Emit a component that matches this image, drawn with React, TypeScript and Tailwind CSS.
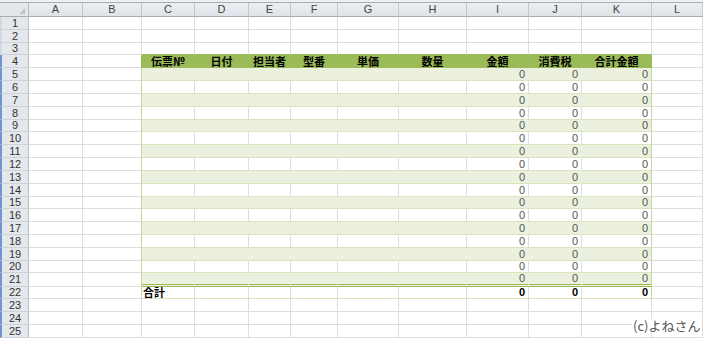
/**
 * Excel風 伝票一覧シート
 * 列見出し + 行番号 + 緑のテーブル (C4:K22)
 */

const COLS = [
  { key: 'A', w: 'w-[54px]' },
  { key: 'B', w: 'w-[59px]' },
  { key: 'C', w: 'w-[53px]' },
  { key: 'D', w: 'w-[54px]' },
  { key: 'E', w: 'w-[42px]' },
  { key: 'F', w: 'w-[47px]' },
  { key: 'G', w: 'w-[61px]' },
  { key: 'H', w: 'w-[68px]' },
  { key: 'I', w: 'w-[62px]' },
  { key: 'J', w: 'w-[53px]' },
  { key: 'K', w: 'w-[70px]' },
  { key: 'L', w: 'flex-1' },
];

const TABLE_COLS = ['C', 'D', 'E', 'F', 'G', 'H', 'I', 'J', 'K'];
const MONEY_COLS = ['I', 'J', 'K'];

const HEADERS: Record<string, string> = {
  C: '伝票№', D: '日付', E: '担当者', F: '型番', G: '単価',
  H: '数量', I: '金額', J: '消費税', K: '合計金額',
};

const ROWS = Array.from({ length: 25 }, (_, i) => i + 1);

/** 行の高さ (12.8px 平均になるよう調整) */
function rowHeight(r: number) {
  if (r === 21) return 'h-[14px]';
  if ([3, 9, 15, 20, 22].includes(r)) return 'h-[12px]';
  return 'h-[13px]';
}

/** セルの背景と罫線 */
function cellStyle(r: number, c: string) {
  const inTable = r >= 4 && r <= 22 && TABLE_COLS.includes(c);
  let bg = 'bg-white';
  let right = 'border-r-[#dcdddf]';
  let bottom = 'border-b border-b-[#dcdddf]';

  if (inTable) {
    if (r === 4) {
      bg = 'bg-[#9bbb59]';
      right = 'border-r-[#9bbb59]';
      bottom = 'border-b border-b-[#9bbb59]';
    } else if (r <= 21 && r % 2 === 1) {
      bg = 'bg-[#ebf1de]';
      right = 'border-r-[#ebf1de]';
      bottom = 'border-b border-b-[#d8e4bc]';
    } else {
      bottom = 'border-b border-b-[#d8e4bc]';
    }
    if (r === 21) bottom = 'border-b-[3px] border-double border-b-[#9bbb59]';
    if (c === 'K') right = r === 4 ? 'border-r-[#9bbb59]' : 'border-r-[#c4d79b]';
  }
  if (c === 'B' && r >= 4 && r <= 22) right = r === 4 ? 'border-r-[#9bbb59]' : 'border-r-[#c4d79b]';
  if (r === 3 && TABLE_COLS.includes(c)) bottom = 'border-b border-b-[#9bbb59]';

  return `${bg} border-r ${right} ${bottom}`;
}

/** セルの中身 */
function CellText({ r, c }: { r: number; c: string }) {
  if (r === 4 && HEADERS[c]) {
    return <span className="w-full text-center font-bold text-black">{HEADERS[c]}</span>;
  }
  if (r >= 5 && r <= 21 && MONEY_COLS.includes(c)) {
    return <span className="w-full text-right pr-[3px] text-[#555] font-['Liberation_Sans']">0</span>;
  }
  if (r === 22 && c === 'C') {
    return <span className="pl-[1px] font-bold text-black">合計</span>;
  }
  if (r === 22 && MONEY_COLS.includes(c)) {
    return <span className="w-full text-right pr-[3px] font-bold text-black font-['Liberation_Sans']">0</span>;
  }
  return null;
}

export default function App() {
  return (
    <div className="relative w-[703px] h-[338px] overflow-hidden bg-white font-['Noto_Sans_CJK_JP',sans-serif] text-[11px] leading-none select-none">
      {/* 数式バーの名残 */}
      <div className="h-[3px] bg-[#eef0f2] border-b border-b-[#a9aeb5]" />

      {/* 列見出し */}
      <div className="flex h-[14px]">
        <div className="w-[29px] shrink-0 relative bg-[#e4e7eb] border-r border-r-[#b9bec6] border-b border-b-[#a6acb5]">
          <svg width="6" height="6" viewBox="0 0 6 6" className="absolute right-[3px] bottom-[2px]">
            <polygon points="6,0 6,6 0,6" fill="#c2c6cc" />
          </svg>
        </div>
        {COLS.map((col) => (
          <div
            key={col.key}
            className={`${col.w} shrink-0 flex items-center justify-center bg-gradient-to-b from-[#eceff2] to-[#dfe3e8] border-r border-r-[#c3c8cf] border-b border-b-[#a6acb5] text-[#444] font-['Liberation_Sans'] text-[11px]`}
          >
            {col.key}
          </div>
        ))}
      </div>

      {/* 行 */}
      {ROWS.map((r) => (
        <div key={r} className={`flex ${rowHeight(r)}`}>
          <div
            className={`w-[29px] shrink-0 flex items-center justify-center bg-[#e4e7eb] border-r border-r-[#b9bec6] border-b border-b-[#cfd3d9] border-l-2 ${r >= 4 ? 'border-l-[#7496cf]' : 'border-l-[#d3d8df]'} text-[#333] font-['Liberation_Sans'] text-[11px]`}
          >
            {r}
          </div>
          {COLS.map((col) => (
            <div key={col.key} className={`${col.w} shrink-0 flex items-center overflow-visible whitespace-nowrap ${cellStyle(r, col.key)}`}>
              <CellText r={r} c={col.key} />
            </div>
          ))}
        </div>
      ))}

      {/* 著作表示 (テキストボックス) */}
      <div className="absolute left-[632px] top-[319px] px-[1px] bg-white text-[13px] text-[#555] leading-none">
        (c)よねさん
      </div>
    </div>
  );
}
